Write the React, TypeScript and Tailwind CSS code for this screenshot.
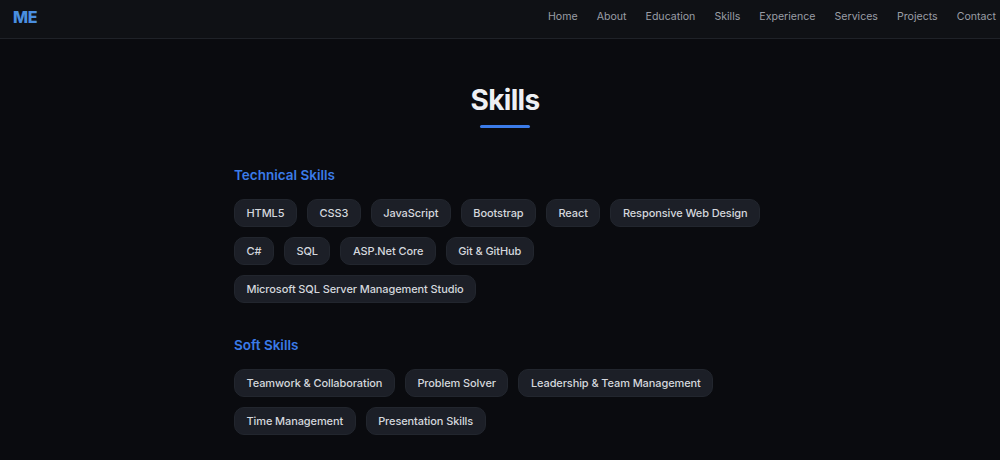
const navLinks = ['Home', 'About', 'Education', 'Skills', 'Experience', 'Services', 'Projects', 'Contact'];

const technical = [
  'HTML5',
  'CSS3',
  'JavaScript',
  'Bootstrap',
  'React',
  'Responsive Web Design',
  'C#',
  'SQL',
  'ASP.Net Core',
  'Git & GitHub',
  'Microsoft SQL Server Management Studio',
];

const soft = [
  'Teamwork & Collaboration',
  'Problem Solver',
  'Leadership & Team Management',
  'Time Management',
  'Presentation Skills',
];

function SkillGroup({ title, items }: { title: string; items: string[] }) {
  return (
    <div>
      <h3 className="text-[13.5px] font-semibold text-[#3b7be8] leading-5">{title}</h3>
      <div className="mt-[14px] flex flex-wrap gap-[10px]">
        {items.map((s) => (
          <span
            key={s}
            className="h-[28px] px-[11.5px] flex items-center rounded-[10px] bg-[#1c1f27] border border-[#22262e] text-[11px] tracking-[-0.1px] font-medium text-[#d4d7dd]"
          >
            {s}
          </span>
        ))}
      </div>
    </div>
  );
}

export default function App() {
  return (
    <div className="min-h-[460px] bg-[#0a0b0f] font-['Inter','Noto_Sans',sans-serif]">
      {/* Navbar */}
      <header className="h-[39px] pb-[4px] bg-[#0f1115] border-b border-[#1f2228] flex items-center justify-between pl-[13px] pr-[4px]">
        <span className="text-[16px] font-extrabold text-[#4a8fe0] tracking-tight">ME</span>
        <nav className="flex items-center gap-[19px]">
          {navLinks.map((l) => (
            <a key={l} className="text-[10.6px] text-[#9a9ea6] cursor-pointer">
              {l}
            </a>
          ))}
        </nav>
      </header>

      {/* Skills section */}
      <section className="pt-[45px] pb-6">
        <div className="ml-[234px] w-[542px]">
          <div className="flex flex-col items-center">
            <h2 className="text-[28px] font-bold text-[#eef0f4] leading-8 tracking-tight">Skills</h2>
            <div className="mt-[9px] w-[50px] h-[3px] rounded-full bg-[#3b7be8]" />
          </div>
          <div className="mt-[37px] flex flex-col gap-[32px]">
            <SkillGroup title="Technical Skills" items={technical} />
            <SkillGroup title="Soft Skills" items={soft} />
          </div>
        </div>
      </section>
    </div>
  );
}
